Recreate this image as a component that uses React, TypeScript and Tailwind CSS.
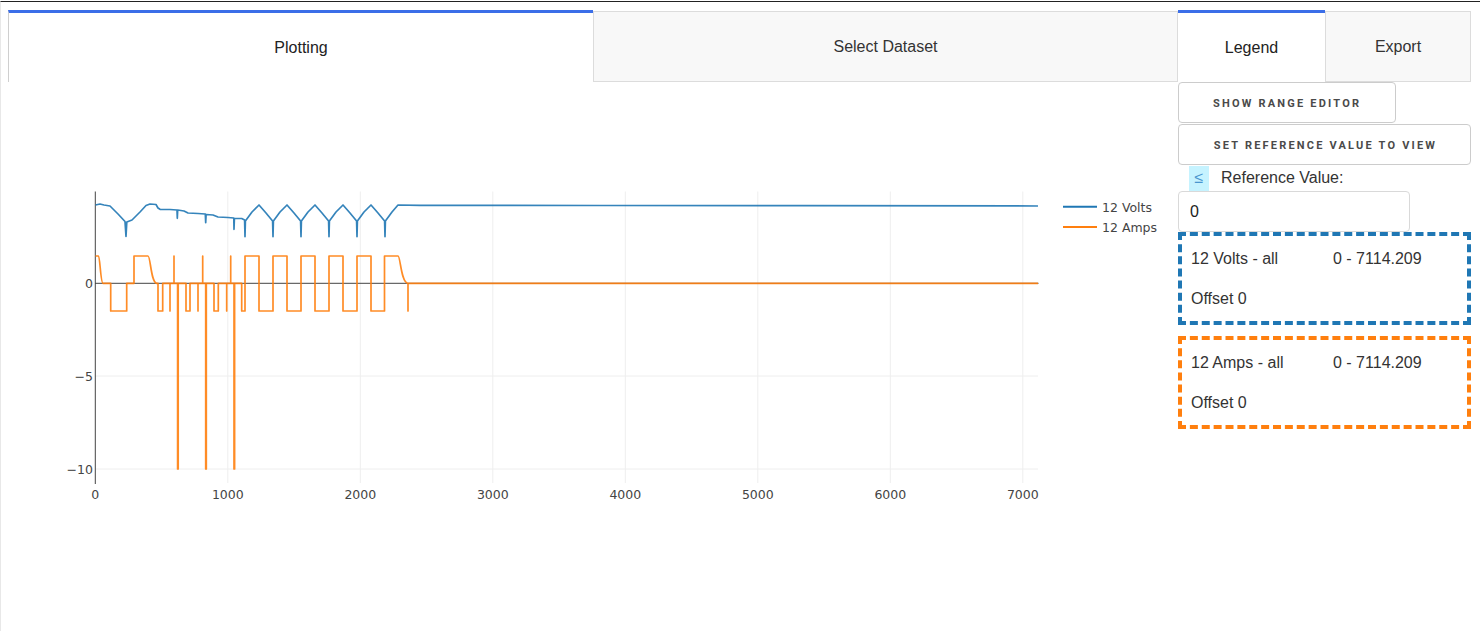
import React from 'react';

const X0 = 95.3;
const PX_PER_UNIT = 0.1325;
const xOf = (t: number) => X0 + t * PX_PER_UNIT;

// volts trace, in plot pixel space
function voltsPath() {
  const pts: [number, number][] = [
    [95.5, 205], [100, 204], [104, 205], [110, 206], [118, 214], [125, 221.5],
    [126, 236.5], [126.8, 222], [132, 220], [140, 212], [146, 205.5], [150, 204],
    [156, 204.5], [158, 208], [160, 209.3], [170, 209.5], [177, 210], [177.3, 218.3],
    [177.7, 210], [184, 211], [188, 213], [198, 213.5], [205.3, 214], [205.7, 222.7],
    [206.1, 214.5], [213, 215], [218, 217], [228, 217.5], [233.8, 218], [234, 229.3],
    [234.4, 218.5], [241.7, 218.5], [244.6, 220], [245, 236.7], [245.4, 221],
  ];
  for (let k = 0; k < 5; k++) {
    const b = 245 + 28 * k;
    pts.push([b + 7, 212], [b + 14, 205], [b + 21, 213], [b + 27.6, 221], [b + 28, 236.7], [b + 28.4, 221]);
  }
  pts.push([392, 212], [398, 205], [420, 205.3], [600, 205.5], [800, 205.6], [1038, 206]);
  return 'M' + pts.map(([x, y]) => `${x},${y}`).join(' L');
}

const ampsPath =
  'M95.5,256 L98.5,256 C100,256 100.5,283 103,283.3 H110.7 V311 H126.7 V283.3 H134 V256 H148 ' +
  'C150.5,256 151,283 156.7,283.3 H158 V311 H162.7 V283.3 H170 V311 V283.3 H174 V256 V283.3 ' +
  'H177.6 V469 H178.2 V283.3 H186 V311 H190 V283.3 H198 V311 V283.3 H202.7 V256 V283.3 ' +
  'H205.7 V469 H206.3 V283.3 H214 V311 H218.3 V283.3 H226.7 V311 V283.3 H230.7 V256 V283.3 ' +
  'H234 V469 H234.6 V283.3 H241.7 V311 H245 V256 H259 V311 H273 V256 H287 V311 H301 V256 ' +
  'H315 V311 H329 V256 H343 V311 H357 V256 H371 V311 H384.5 V256 H398 ' +
  'C400.5,256 401,283 408,283.3 V311 V283.3 H1038';

const plotFont = "'DejaVu Sans', Verdana, sans-serif";

function Chart() {
  const xticks = [0, 1000, 2000, 3000, 4000, 5000, 6000, 7000];
  const yticks: [string, number][] = [['0', 283.3], ['\u22125', 376], ['\u221210', 469]];
  return (
    <svg width={1170} height={450} viewBox="8 82 1170 450" className="block">
      {/* grid */}
      {xticks.slice(1).map((t) => (
        <line key={t} x1={xOf(t)} x2={xOf(t)} y1={191.5} y2={483} stroke="#eeeeee" strokeWidth={1} />
      ))}
      <line x1={95} x2={1038} y1={376} y2={376} stroke="#eeeeee" />
      <line x1={95} x2={1038} y1={469} y2={469} stroke="#eeeeee" />

      {/* zerolines */}
      <line x1={95} x2={1038.5} y1={283.3} y2={283.3} stroke="#444" strokeWidth={1} />
      <line x1={95.3} x2={95.3} y1={191.5} y2={484} stroke="#444" strokeWidth={1} />

      {/* traces */}
      <path d={voltsPath()} fill="none" stroke="#1f77b4" strokeOpacity={0.9} strokeWidth={1.7} strokeLinejoin="round" />
      <path d={ampsPath} fill="none" stroke="#ff7f0e" strokeOpacity={0.9} strokeWidth={1.7} strokeLinejoin="round" />

      {/* ticks */}
      <g fontFamily={plotFont} fontSize={12.5} fill="#444">
        {xticks.map((t) => (
          <text key={t} x={xOf(t)} y={498.5} textAnchor="middle">{t}</text>
        ))}
        {yticks.map(([l, y]) => (
          <text key={l} x={93} y={y + 4.5} textAnchor="end">{l}</text>
        ))}
      </g>

      {/* legend */}
      <line x1={1063} x2={1097} y1={206.7} y2={206.7} stroke="#1f77b4" strokeWidth={2} />
      <line x1={1063} x2={1097} y1={227} y2={227} stroke="#ff7f0e" strokeWidth={2} />
      <g fontFamily={plotFont} fontSize={12.5} fill="#444">
        <text x={1102} y={211.5}>12 Volts</text>
        <text x={1102} y={231.8}>12 Amps</text>
      </g>
    </svg>
  );
}

function TraceBox({ name, color }: { name: string; color: string }) {
  return (
    <div className={`border-4 border-dashed ${color} pl-[9px] pt-[13px] pb-[12px] text-[16px] leading-5 text-[#333]`}>
      <div className="flex">
        <span className="w-[142px]">{name} - all</span>
        <span>0 - 7114.209</span>
      </div>
      <div className="mt-5">Offset 0</div>
    </div>
  );
}

export default function App() {
  return (
    <div className="min-h-screen bg-white pt-px" style={{ fontFamily: '"Liberation Sans", Arial, sans-serif' }}>
      <div className="flex min-h-[630px] border-t border-l border-t-[#222] border-l-[#e8e8e8] pl-[7px] pt-[8px]">
        {/* left column */}
        <div className="w-[1170px] shrink-0">
          <div className="flex h-[72px]">
            <div className="flex w-[585px] items-center justify-center border-l border-t-[3px] border-l-[#cfcfcf] border-t-[#3b6ee8] bg-white pt-[1px] text-[16px] text-[#222]">
              Plotting
            </div>
            <div className="mt-px flex h-[71px] w-[585px] items-center justify-center border border-[#dcdcdc] bg-[#f8f8f8] text-[16px] text-[#333]">
              Select Dataset
            </div>
          </div>
          <Chart />
        </div>

        {/* right column */}
        <div className="flex w-[293px] shrink-0 flex-col items-start">
          <div className="flex h-[72px] w-full">
            <div className="flex w-[147px] items-center justify-center border-t-[3px] border-t-[#3b6ee8] bg-white pt-[1px] text-[16px] text-[#222]">
              Legend
            </div>
            <div className="mt-px flex h-[71px] w-[146px] items-center justify-center border border-[#dcdcdc] bg-[#f8f8f8] text-[16px] text-[#333]">
              Export
            </div>
          </div>

          <button
            className="h-[41px] whitespace-nowrap rounded-[4px] border border-[#cccccc] bg-white px-[34px] pt-[3px] text-[11px] font-bold uppercase tracking-[2.2px] text-[#4a4a4a]"
            style={{ fontFamily: 'Roboto, "Liberation Sans", sans-serif' }}
          >
            Show Range Editor
          </button>
          <button
            className="mt-px h-[41px] w-full whitespace-nowrap rounded-[4px] border border-[#cccccc] bg-white pl-[2px] pt-[3px] text-[11px] font-bold uppercase tracking-[2.2px] text-[#4a4a4a]"
            style={{ fontFamily: 'Roboto, "Liberation Sans", sans-serif' }}
          >
            Set Reference Value to View
          </button>

          <div className="flex h-[26px] items-center">
            <span className="ml-[11px] flex h-[25px] w-[20px] items-center justify-center bg-[#c6f3ff] text-[16px] text-[#4a96cf]">
              ≤
            </span>
            <span className="ml-[12px] text-[16px] text-[#333]">Reference Value:</span>
          </div>

          <input
            readOnly
            value="0"
            className="h-[41px] w-[232px] rounded-[4px] border border-[#d9d9d9] bg-white px-[11px] text-[16px] text-[#222] outline-none"
          />

          <div className="w-full">
            <TraceBox name="12 Volts" color="border-[#1f77b4]" />
            <div className="mt-[11px]">
              <TraceBox name="12 Amps" color="border-[#ff7f0e]" />
            </div>
          </div>
        </div>
      </div>
    </div>
  );
}
